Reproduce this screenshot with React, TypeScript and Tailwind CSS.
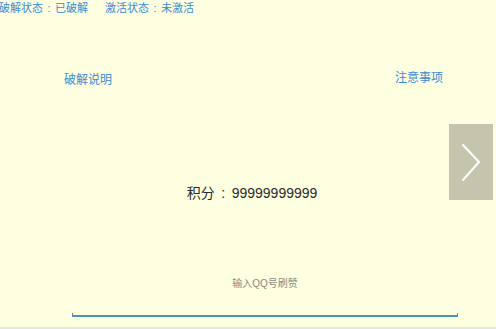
import React from "react";

const FONT = "font-['Liberation_Sans','Noto_Sans_CJK_SC',sans-serif]";

function Colon({ w }: { w: string }) {
  return <span className={`inline-block text-center ${w}`}>:</span>;
}

function NextButton() {
  return (
    <div className="absolute left-[449px] top-[124px] w-[44px] h-[76px] bg-[#c5c5ad] flex items-center justify-center">
      <svg width="44" height="76" viewBox="0 0 44 76">
        <polyline points="14,21 30,38 14,56" fill="none" stroke="#ffffff" strokeWidth="2" strokeLinecap="round" strokeLinejoin="round" />
      </svg>
    </div>
  );
}

export default function App() {
  return (
    <div className={`relative w-[496px] h-[329px] bg-[#fefee0] overflow-hidden flex flex-col ${FONT}`}>
      <div className="flex gap-[17px] pt-[1px] -ml-[1px] text-[11px] leading-[14px] text-[#3b8bd6] whitespace-nowrap">
        <span>破解状态<Colon w="w-[12px]" />已破解</span>
        <span>激活状态<Colon w="w-[12px]" />未激活</span>
      </div>

      <div className="flex justify-between items-start mt-[55px] pl-[64px] pr-[53px] text-[12px] leading-[16px] text-[#3b8bd6]">
        <span className="pt-[2px]">破解说明</span>
        <span>注意事项</span>
      </div>

      <div className="mt-[95px] flex justify-center pl-[8px] text-[14px] leading-[20px] text-[#2a2a2a]">
        <span>积分<Colon w="w-[17px]" />99999999999</span>
      </div>

      <div className="mt-[74px] flex justify-center pl-[34px] text-[10px] leading-[14px] text-[#8a8a80]">
        输入QQ号刷赞
      </div>

      <div className="mt-[22px] ml-[72px] w-[386px] h-[4px] border-x border-b-2 border-[#4a93b8]" />

      <div className="mt-auto h-[2px] bg-[#e6e6df]" />

      <NextButton />
    </div>
  );
}
